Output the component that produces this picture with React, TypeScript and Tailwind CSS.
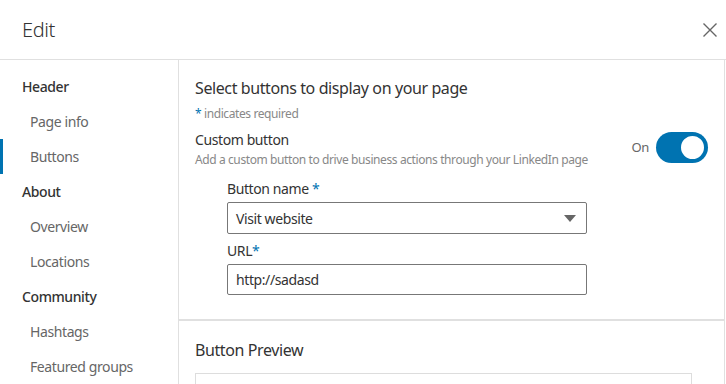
const navItems = [
  { label: 'Header', heading: true },
  { label: 'Page info' },
  { label: 'Buttons', active: true },
  { label: 'About', heading: true },
  { label: 'Overview' },
  { label: 'Locations' },
  { label: 'Community', heading: true },
  { label: 'Hashtags' },
  { label: 'Featured groups' },
];

function Sidebar() {
  return (
    <nav className="w-[179px] shrink-0 border-r border-[#e0e0e0] pt-[9px]">
      {navItems.map((item) => (
        <div
          key={item.label}
          className={
            'relative flex h-[35px] items-center text-[14px] ' +
            (item.heading ? 'pl-[22px] font-medium text-[#333]' : 'pl-[30px] text-[#666]') +
            (item.active ? ' text-[#0073b1]' : '')
          }
        >
          {item.active && <span className="absolute left-0 top-0 h-full w-[3px] bg-[#0073b1]" />}
          {item.label}
        </div>
      ))}
    </nav>
  );
}

function Toggle() {
  return (
    <div className="flex items-center gap-[7px]">
      <span className="text-[13px] text-[#666]">On</span>
      <div className="flex h-[31px] w-[52px] items-center justify-end rounded-full bg-[#0073b1] p-[2px]">
        <div className="h-[27px] w-[27px] rounded-full border-2 border-[#0073b1] bg-white" />
      </div>
    </div>
  );
}

export default function App() {
  return (
    <div
      className="h-[384px] w-[726px] overflow-hidden bg-white tracking-[-0.025em]"
      style={{ fontFamily: '"Noto Sans", "Open Sans", sans-serif' }}
    >
      <header className="flex h-[60px] items-center justify-between border-b border-[#e0e0e0] pl-[22px] pr-[9px]">
        <h1 className="text-[20px] font-light text-[#333]">Edit</h1>
        <button className="text-[#666]">
          <svg width="14" height="14" viewBox="0 0 14 14" className="block">
            <path d="M0.5 0.5l13 13M13.5 0.5l-13 13" stroke="#666" strokeWidth="1.4" fill="none" />
          </svg>
        </button>
      </header>
      <div className="flex">
        <Sidebar />
        <main className="w-[546px] shrink-0 border-r border-[#e0e0e0]">
          <section className="border-b-2 border-[#e0e0e0] pb-[24px] pl-[16px] pr-[16px] pt-[16px]">
            <h2 className="text-[16px] leading-[24px] text-[#333]">Select buttons to display on your page</h2>
            <p className="mt-[6px] text-[12px] leading-[16px] text-[#888]">
              <span className="text-[#0073b1]">*</span> indicates required
            </p>
            <div className="mt-[8px] flex items-start justify-between">
              <div>
                <div className="text-[14px] leading-[20px] text-[#333]">Custom button</div>
                <div className="mt-[2px] text-[12px] leading-[16px] text-[#888]">
                  Add a custom button to drive business actions through your LinkedIn page
                </div>
              </div>
              <div className="mt-[2px]">
                <Toggle />
              </div>
            </div>
            <div className="ml-[32px] w-[360px]">
              <label className="mt-[11px] block text-[14px] leading-[20px] text-[#333]">
                Button name <span className="text-[#0073b1]">*</span>
              </label>
              <div className="mt-[3px] flex h-[32px] items-center justify-between rounded-[2px] border border-[#777] pl-[8px] pr-[10px] text-[14px] text-[#333]">
                <span>Visit website</span>
                <svg width="12" height="7" viewBox="0 0 12 7">
                  <path d="M0 0h12L6 7z" fill="#666" />
                </svg>
              </div>
              <label className="mt-[7px] block text-[14px] leading-[20px] text-[#333]">
                URL<span className="text-[#0073b1]">*</span>
              </label>
              <div className="mt-[3px] flex h-[31px] items-center rounded-[2px] border border-[#777] pl-[8px] text-[14px] text-[#333]">
                http://sadasd
              </div>
            </div>
          </section>
          <section className="pl-[16px] pr-[32px] pt-[17px]">
            <h2 className="text-[16px] leading-[24px] text-[#333]">Button Preview</h2>
            <div className="mt-[11px] h-[60px] border border-[#ddd]" />
          </section>
        </main>
      </div>
    </div>
  );
}
